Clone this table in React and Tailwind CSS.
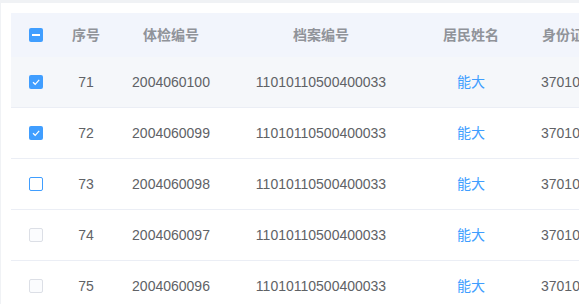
import React from "react";

const rows = [
  { no: 71, tj: "2004060100", state: "checked", bg: "bg-[#f5f7fa]" },
  { no: 72, tj: "2004060099", state: "checked", bg: "bg-white" },
  { no: 73, tj: "2004060098", state: "focus", bg: "bg-white" },
  { no: 74, tj: "2004060097", state: "disabled", bg: "bg-white" },
  { no: 75, tj: "2004060096", state: "disabled", bg: "bg-white" },
];

function Box({ state }) {
  if (state === "checked") {
    return (
      <span className="flex h-[14px] w-[14px] items-center justify-center rounded-[2px] bg-[#409eff]">
        <svg width="10" height="10" viewBox="0 0 10 10">
          <path d="M2 5.2 L4.2 7.3 L8.2 2.8" stroke="white" strokeWidth="1.2" fill="none" />
        </svg>
      </span>
    );
  }
  if (state === "indeterminate") {
    return (
      <span className="flex h-[14px] w-[14px] items-center justify-center rounded-[2px] bg-[#409eff]">
        <span className="h-[2px] w-[8px] bg-white" />
      </span>
    );
  }
  if (state === "focus") {
    return <span className="block h-[14px] w-[14px] rounded-[2px] border border-[#409eff] bg-white" />;
  }
  return <span className="block h-[14px] w-[14px] rounded-[2px] border border-[#dcdfe6] bg-[#fbfcfe]" />;
}

export default function App() {
  return (
    <div
      className="h-[304px] w-[579px] overflow-hidden bg-[#f0f2f5] pl-[1px] pt-[3px]"
      style={{ fontFamily: '"Liberation Sans", "Noto Sans CJK SC", sans-serif' }}
    >
      <div className="h-[400px] w-[700px] bg-white pl-[10px] pt-[10px]">
        <div className="w-[680px] text-[14px]">
          <div className="flex h-[44px] items-center bg-[#f2f5fc] font-bold text-[#909399]">
            <div className="flex w-[50px] justify-center"><Box state="indeterminate" /></div>
            <div className="w-[50px] text-center">序号</div>
            <div className="w-[120px] text-center">体检编号</div>
            <div className="w-[180px] text-center">档案编号</div>
            <div className="w-[120px] text-center">居民姓名</div>
            <div className="flex-1 pl-[11px]">身份证号</div>
          </div>
          {rows.map((r) => (
            <div key={r.no} className={`flex h-[51px] items-center border-b border-[#ebeef5] text-[#606266] ${r.bg}`}>
              <div className="flex w-[50px] justify-center"><Box state={r.state} /></div>
              <div className="w-[50px] text-center">{r.no}</div>
              <div className="w-[120px] text-center">{r.tj}</div>
              <div className="w-[180px] text-center">11010110500400033</div>
              <div className="w-[120px] text-center text-[#409eff]">能大</div>
              <div className="flex-1 pl-[10px]">370101198001011234</div>
            </div>
          ))}
        </div>
      </div>
    </div>
  );
}
